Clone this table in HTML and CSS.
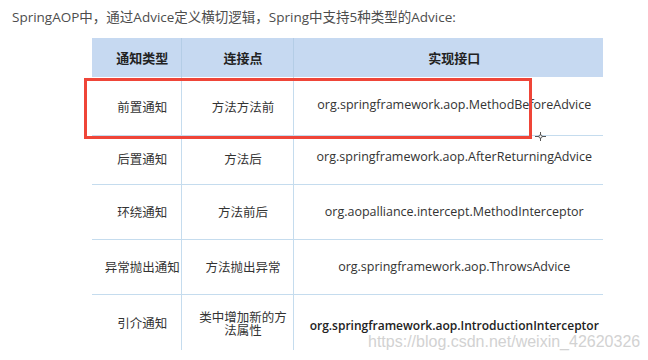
FILE: index.html
```html
<!DOCTYPE html>
<html lang="zh-CN">
<head>
<meta charset="utf-8">
<title>Spring AOP Advice</title>
<link rel="stylesheet" href="styles.css">
</head>
<body>
<p class="intro">SpringAOP中，通过Advice定义横切逻辑，Spring中支持5种类型的Advice:</p>
<div class="figure">
  <table class="advice">
    <colgroup>
      <col class="c-type">
      <col class="c-point">
      <col class="c-iface">
    </colgroup>
    <thead>
      <tr><th>通知类型</th><th>连接点</th><th>实现接口</th></tr>
    </thead>
    <tbody>
      <tr class="r1"><td>前置通知</td><td>方法方法前</td><td class="code">org.springframework.aop.MethodBeforeAdvice</td></tr>
      <tr class="r2"><td>后置通知</td><td>方法后</td><td class="code">org.springframework.aop.AfterReturningAdvice</td></tr>
      <tr class="r3"><td>环绕通知</td><td>方法前后</td><td class="code">org.aopalliance.intercept.MethodInterceptor</td></tr>
      <tr class="r4"><td>异常抛出通知</td><td>方法抛出异常</td><td class="code">org.springframework.aop.ThrowsAdvice</td></tr>
      <tr class="r5"><td>引介通知</td><td class="wrap">类中增加新的方<br>法属性</td><td class="code strong">org.springframework.aop.IntroductionInterceptor</td></tr>
    </tbody>
  </table>
  <div class="highlight"></div>
  <svg class="cursor" width="11" height="9" viewBox="0 0 11 9">
    <path d="M0 4.5H11M5.5 0V9" stroke="#555" stroke-width="1"/>
    <circle cx="5.5" cy="4.5" r="1.6" fill="#fff" stroke="#555" stroke-width="1"/>
  </svg>
  <div class="watermark">https://blog.csdn.net/weixin_42620326</div>
</div>
</body>
</html>
```

FILE: styles.css
```css
html, body {
  margin: 0;
  padding: 0;
  background: #fff;
}

body {
  width: 648px;
  height: 360px;
  overflow: hidden;
  font-family: "Open Sans", "Noto Sans CJK SC", sans-serif;
}

.intro {
  margin: 0;
  padding: 7px 0 0 12px;
  font-size: 13.5px;
  line-height: 20px;
  color: #4d4d4d;
}

.figure {
  position: relative;
  margin: 11px 0 0 92px;
  width: 511px;
}

.advice {
  border-collapse: collapse;
  table-layout: fixed;
  width: 511px;
  font-size: 12.5px;
  color: #333;
}

.c-type { width: 89px; }
.c-point { width: 112px; }
.c-iface { width: 310px; }

.advice th,
.advice td {
  padding: 0 0 0 12px;
  text-align: center;
  vertical-align: middle;
  border-left: 1px solid #c5dcee;
  border-bottom: 1px solid #c5dcee;
}

.advice th:first-child,
.advice td:first-child {
  border-left: none;
}

.advice thead tr {
  height: 39px;
  background: #c6d9f1;
}

.advice th {
  font-size: 13px;
  font-weight: bold;
  color: #222;
  border-left-color: #b4cde6;
  border-bottom: none;
}

.advice tr.r1 { height: 58px; }
.advice tr.r2 { height: 49px; }
.advice tr.r3 { height: 55px; }
.advice tr.r4 { height: 55px; }
.advice tr.r5 { height: 56px; }

.advice tr.r5 td { border-bottom: none; }

.advice td.code {
  font-size: 12.5px;
  color: #333;
}

.advice td.strong {
  color: #222;
  font-weight: 600;
  font-size: 12px;
  line-height: 14px;
}

.advice td.wrap {
  line-height: 13px;
}

.advice tr.r1 td { padding-top: 2px; }
.advice tr.r1 td.code { padding-top: 0; padding-bottom: 2px; }
.advice tr.r2 td { padding-bottom: 2px; }
.advice tr.r2 td.code { padding-bottom: 6px; }
.advice tr.r5 td { padding-top: 0; }
.advice tr.r5 td.wrap { padding-top: 4px; }
.advice tr.r5 td.code { padding-top: 8px; }

/* red annotation frame over the first row */
.highlight {
  position: absolute;
  left: -8px;
  top: 40px;
  width: 442px;
  height: 55px;
  border: 3px solid #ef4538;
}

.cursor {
  position: absolute;
  left: 443px;
  top: 94px;
}

.watermark {
  position: absolute;
  left: 276px;
  top: 296px;
  font-family: "Liberation Sans", Arial, sans-serif;
  font-size: 16px;
  line-height: 16px;
  color: #d2d2d2;
  white-space: nowrap;
}
```
